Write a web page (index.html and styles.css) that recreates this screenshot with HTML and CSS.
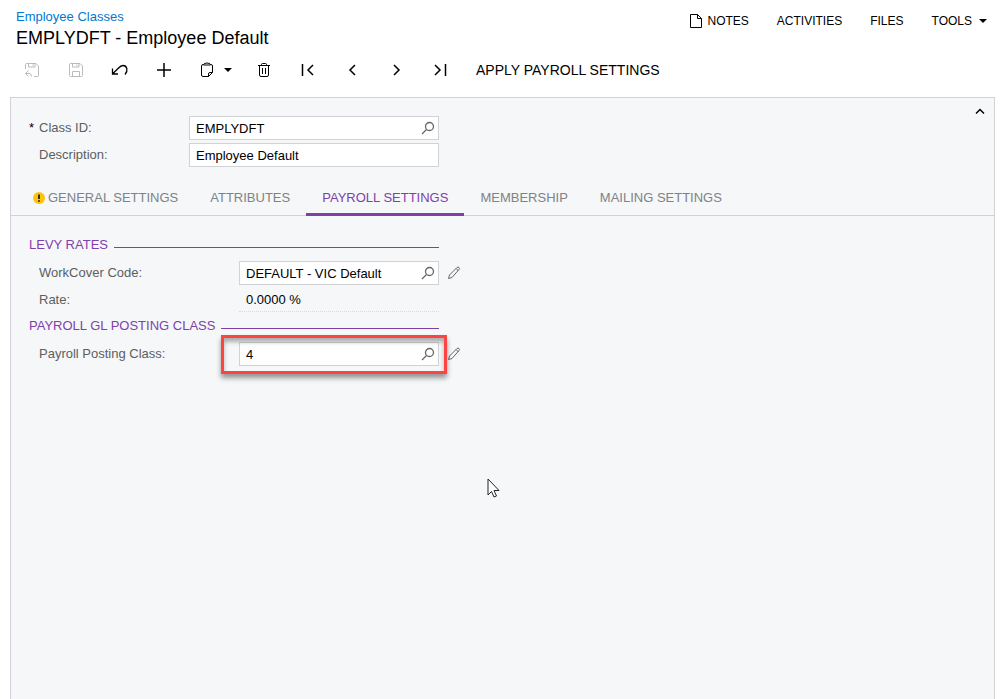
FILE: index.html
```html
<!DOCTYPE html>
<html lang="en">
  <head>
    <meta charset="UTF-8" />
    <meta name="viewport" content="width=device-width, initial-scale=1.0" />
    <title>Employee Classes</title>
    <link rel="stylesheet" href="styles.css" />
  </head>
  <body>
    <header class="header">
      <div class="titles">
        <a class="crumb" href="#">Employee Classes</a>
        <h1>EMPLYDFT - Employee Default</h1>
      </div>
      <nav class="menu">
        <button type="button" class="notes">
          <svg width="14" height="16" viewBox="0 0 14 16" class="icon"><path d="M1.500 1.500h7l4 4v9h-11zM8.500 1.500v4h4" /></svg>
          NOTES
        </button>
        <button type="button">ACTIVITIES</button>
        <button type="button">FILES</button>
        <button type="button">TOOLS <span class="caret"></span></button>
      </nav>
    </header>

    <div class="toolbar">
      <button type="button" class="tool" aria-label="Save and close" disabled>
        <svg width="16" height="16" viewBox="0 0 16 16" class="icon"><path d="M1.500 7v-4.500q0-1 1-1h9.500l2.500 2.500v9.500q0 1-1 1h-3.500M4.500 1.500v3.500h6.500v-3.500M9 2.500v1.500M4.500 8.500L1.500 11.500l3 3M1.500 11.500h3.500q2.500 0 2.500 3" /></svg>
      </button>
      <button type="button" class="tool" aria-label="Save" disabled>
        <svg width="16" height="16" viewBox="0 0 16 16" class="icon"><path d="M2.500 1.500h9.500l2.500 2.500v9.500q0 1-1 1h-11q-1 0-1-1v-11q0-1 1-1zM4.500 1.500v3.500h6.500v-3.500M9 2.500v1.500M4.500 14v-4.500h7v4.500" /></svg>
      </button>
      <button type="button" class="tool" aria-label="Undo">
        <svg width="18" height="16" viewBox="0 0 18 16" class="icon undo"><path d="M1.500 6.500v5.500h5.500M1.500 12L7 6.500C9 4.500 10 3.500 12 3.500c4 0 5.500 5 2 9" /></svg>
      </button>
      <button type="button" class="tool" aria-label="Add">
        <svg width="16" height="16" viewBox="0 0 16 16" class="icon thick"><path d="M8 1v14M1 8h14" /></svg>
      </button>
      <button type="button" class="tool paste" aria-label="Copy and paste">
        <svg width="14" height="16" viewBox="0 0 14 16" class="icon"><path d="M3.500 2.500h-.5q-1.500 0-1.500 1.500v9q0 1.500 1.500 1.500h5.500l4-4v-6.500q0-1.500-1.500-1.500h-.5M8.500 14.500v-2.500q0-1.500 1.500-1.500h2.500M3.500 3q0-2 3.500-2t3.500 2z" /></svg>
        <span class="caret"></span>
      </button>
      <button type="button" class="tool" aria-label="Delete">
        <svg width="16" height="16" viewBox="0 0 16 16" class="icon"><path d="M2 3.500h12M5.500 3.500v-1q0-1 1-1h3q1 0 1 1v1M3.500 3.500v9.500q0 1.500 1.500 1.500h6q1.500 0 1.500-1.500v-9.500M6.500 6v6M9.500 6v6" /></svg>
      </button>
      <button type="button" class="tool" aria-label="First">
        <svg width="16" height="16" viewBox="0 0 16 16" class="icon thick"><path d="M2.500 2v12M13 3L8 8l5 5" /></svg>
      </button>
      <button type="button" class="tool" aria-label="Previous">
        <svg width="16" height="16" viewBox="0 0 16 16" class="icon thick"><path d="M11 3l-5 5 5 5" /></svg>
      </button>
      <button type="button" class="tool" aria-label="Next">
        <svg width="16" height="16" viewBox="0 0 16 16" class="icon thick"><path d="M6 3l5 5-5 5" /></svg>
      </button>
      <button type="button" class="tool" aria-label="Last">
        <svg width="16" height="16" viewBox="0 0 16 16" class="icon thick"><path d="M3 3l5 5-5 5M13.500 2v12" /></svg>
      </button>
      <button type="button" class="apply">APPLY PAYROLL SETTINGS</button>
    </div>

    <main class="panel">
      <div class="summary">
        <form class="fields">
          <div class="row">
            <label for="class-id"><span class="required">*</span>Class ID:</label>
            <div class="field">
              <input type="text" id="class-id" value="EMPLYDFT" />
              <button type="button" class="lookup" aria-label="Find class">
                <svg width="14" height="14" viewBox="0 0 14 14" class="icon"><circle cx="8.500" cy="5.500" r="4" /><path d="M5.500 8.500L1 13" /></svg>
              </button>
            </div>
          </div>
          <div class="row">
            <label for="description">Description:</label>
            <div class="field">
              <input type="text" id="description" value="Employee Default" />
            </div>
          </div>
        </form>
        <button type="button" class="collapse" aria-label="Collapse">
          <svg width="12" height="8" viewBox="0 0 12 8" class="icon thick"><path d="M2 6.500l4-4 4 4" /></svg>
        </button>
      </div>

      <nav class="tabs">
        <button type="button" class="tab">
          <svg width="12" height="12" viewBox="0 0 12 12"><circle cx="6" cy="6" r="6" fill="#ffc20e" /><path d="M6 2.500v4.500M6 8.200v1.600" stroke="#222" stroke-width="1.800" /></svg>
          GENERAL SETTINGS
        </button>
        <button type="button" class="tab">ATTRIBUTES</button>
        <button type="button" class="tab active">PAYROLL SETTINGS</button>
        <button type="button" class="tab">MEMBERSHIP</button>
        <button type="button" class="tab">MAILING SETTINGS</button>
      </nav>

      <form class="settings">
        <h2>LEVY RATES</h2>
        <div class="row">
          <label for="workcover">WorkCover Code:</label>
          <div class="field">
            <input type="text" id="workcover" value="DEFAULT - VIC Default" />
            <button type="button" class="lookup" aria-label="Find code">
              <svg width="14" height="14" viewBox="0 0 14 14" class="icon"><circle cx="8.500" cy="5.500" r="4" /><path d="M5.500 8.500L1 13" /></svg>
            </button>
          </div>
          <button type="button" class="edit" aria-label="Edit code">
            <svg width="14" height="14" viewBox="0 0 14 14" class="icon"><path d="M1.500 12.500l1-3.500 7.500-7.500q1-.8 2 0t0 2L5 11.500zM9 2.500l2.500 2.500" /></svg>
          </button>
        </div>
        <div class="row">
          <label for="rate">Rate:</label>
          <output class="value" id="rate">0.0000 %</output>
        </div>
        <h2>PAYROLL GL POSTING CLASS</h2>
        <div class="row">
          <label for="posting-class">Payroll Posting Class:</label>
          <div class="field">
            <input type="text" id="posting-class" value="4" />
            <button type="button" class="lookup" aria-label="Find posting class">
              <svg width="14" height="14" viewBox="0 0 14 14" class="icon"><circle cx="8.500" cy="5.500" r="4" /><path d="M5.500 8.500L1 13" /></svg>
            </button>
            <span class="highlight"></span>
          </div>
          <button type="button" class="edit" aria-label="Edit posting class">
            <svg width="14" height="14" viewBox="0 0 14 14" class="icon"><path d="M1.500 12.500l1-3.500 7.500-7.500q1-.8 2 0t0 2L5 11.500zM9 2.500l2.500 2.500" /></svg>
          </button>
        </div>
      </form>
    </main>

    <svg class="cursor" width="13" height="20" viewBox="0 0 13 20"><path d="M1 1v16l3.500-3.500 2.500 5.500 2.500-1-2.500-5.500h5z" fill="#fff" stroke="#222" /></svg>
  </body>
</html>
```
FILE: styles.css
```css
* {
  box-sizing: border-box;
}
body {
  display: flex;
  flex-direction: column;
  min-height: 100vh;
  margin: 0;
  background: #fff;
  color: #000;
  font-family: 'Liberation Sans', Arial, sans-serif;
  font-size: 13px;
}
button {
  padding: 0;
  border: none;
  background: none;
  color: inherit;
  font: inherit;
  white-space: nowrap;
  cursor: pointer;
}
.icon {
  display: block;
  flex: none;
  fill: none;
  stroke: currentColor;
  stroke-width: 1;
}
.thick {
  stroke-width: 1.5;
}
.undo {
  stroke-width: 1.3;
}
.caret {
  border: 4px solid transparent;
  border-top-color: #000;
  border-bottom: none;
}

/* header */
.header {
  display: flex;
  justify-content: space-between;
  padding: 8px 13px 0 16px;
}
.crumb {
  display: block;
  color: #0278d0;
  line-height: 18px;
  text-decoration: none;
}
h1 {
  margin: 0;
  font-size: 18px;
  font-weight: normal;
  line-height: 24px;
}
.menu {
  display: flex;
  align-items: center;
  gap: 28px;
  height: 26px;
  font-size: 12px;
}
.menu button {
  display: flex;
  align-items: center;
  gap: 7px;
}
.menu .notes {
  gap: 4px;
}

/* toolbar */
.toolbar {
  display: flex;
  align-items: center;
  height: 40px;
  margin-bottom: 7px;
  padding-left: 10px;
}
.tool {
  display: flex;
  align-items: center;
  justify-content: center;
  width: 44px;
  height: 32px;
}
.tool:disabled {
  color: #bbb;
}
.paste {
  gap: 10px;
  width: 56px;
  padding-left: 4px;
}
.apply {
  margin-left: 14px;
  font-size: 14px;
}

/* panel */
.panel {
  flex: 1;
  margin: 0 5px 0 10px;
  border: 1px solid #d0d2d6;
  border-bottom: none;
  background: #f5f7f9;
}
.summary {
  display: flex;
  justify-content: space-between;
  align-items: flex-start;
  padding: 18px 8px 0 18px;
}
.collapse {
  margin-top: -9px;
}
.row {
  display: flex;
  align-items: center;
  height: 24px;
  margin-bottom: 3px;
}
.row label {
  width: 160px;
  padding-left: 10px;
  color: #5c5e60;
  line-height: 24px;
}
.required {
  display: inline-block;
  width: 10px;
  margin-left: -10px;
  color: #000;
}
.field {
  display: flex;
  position: relative;
  width: 250px;
  height: 24px;
  border: 1px solid #d0d2d6;
  background: #fff;
}
.field input {
  flex: 1;
  min-width: 0;
  padding: 0 6px;
  border: none;
  outline: none;
  background: none;
  color: #000;
  font: inherit;
}
.lookup {
  padding: 0 3px;
  color: #666;
}
.lookup .icon {
  stroke-width: 1.3;
}

/* tabs */
.tabs {
  display: flex;
  height: 46px;
  padding-left: 6px;
  border-bottom: 1px solid #d0d2d6;
}
.tab {
  display: flex;
  align-items: center;
  gap: 3px;
  height: 46px;
  padding: 12px 16px 0;
  border-bottom: 3px solid transparent;
  color: #808285;
}
.tab.active {
  border-color: #7f3fab;
  color: #7f3fab;
}

/* payroll settings */
.settings {
  width: 450px;
  padding: 18px 0 0 18px;
}
h2 {
  display: flex;
  align-items: center;
  gap: 6px;
  width: 410px;
  height: 20px;
  margin: 0 0 7px;
  color: #7f3fab;
  font-size: 13px;
  font-weight: normal;
}
h2::after {
  content: '';
  flex: 1;
  margin-top: 6px;
  border-top: 1px solid #7f3fab;
}
.settings .row label {
  width: 210px;
}
.settings .field,
.value {
  width: 200px;
}
.value {
  height: 24px;
  padding-left: 7px;
  border-bottom: 1px dotted #d8dade;
  line-height: 24px;
}
.edit {
  margin-left: 8px;
  color: #666;
}
.highlight {
  position: absolute;
  top: -8px;
  right: -9px;
  bottom: -9px;
  left: -19px;
  border: 3px solid #ff4343;
  box-shadow: 0 4px 5px rgba(0, 0, 0, 0.4), inset 0 4px 4px rgba(0, 0, 0, 0.3);
  pointer-events: none;
}

.cursor {
  position: absolute;
  top: 478px;
  left: 487px;
}
```
